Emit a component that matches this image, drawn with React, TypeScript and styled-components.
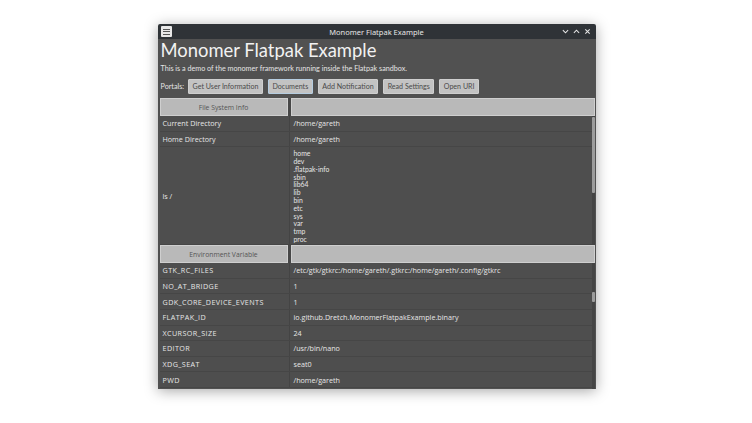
import React from 'react';
import styled, { createGlobalStyle } from 'styled-components';

const GlobalStyle = createGlobalStyle`
  body {
    margin: 0;
    background: #ffffff;
    font-family: Lato, "Noto Sans", sans-serif;
  }
`;

const Page = styled.div`
  width: 752px;
  height: 423px;
  display: flex;
  justify-content: center;
  align-items: flex-start;
  padding-top: 24px;
  box-sizing: border-box;
  padding-left: 1px;
`;

const Window = styled.div`
  width: 438px;
  height: 365px;
  display: flex;
  flex-direction: column;
  box-shadow: 0 2px 14px rgba(0, 0, 0, 0.35);
  border-radius: 2px 2px 0 0;
  overflow: hidden;
`;

const TitleBar = styled.div`
  height: 15px;
  background: #2f3337;
  display: grid;
  grid-template-columns: 40px 1fr 40px;
  align-items: center;
  padding: 0 3px;
  color: #e6e6e6;
  font-family: "Noto Sans", sans-serif;
  font-size: 7.5px;
`;

const TitleText = styled.div`
  text-align: center;
`;

const TitleButtons = styled.div`
  display: flex;
  justify-content: flex-end;
  gap: 4px;
  padding-right: 2px;
`;

const MenuIcon = styled.div`
  width: 11px;
  height: 11px;
  background: #e8e8e8;
  border-radius: 1px;
  display: flex;
  flex-direction: column;
  justify-content: center;
  gap: 1.5px;
  padding: 0 2px;
  box-sizing: border-box;
  span {
    height: 1px;
    background: #555;
  }
`;

const Body = styled.div`
  flex: 1;
  background: #515151;
  display: flex;
  flex-direction: column;
  padding: 0 1px 0 2px;
  min-height: 0;
  color: #e4e4e4;
`;

const Heading = styled.h1`
  margin: 0 0 0 1px;
  font-weight: 400;
  font-size: 18.4px;
  line-height: 23px;
  color: #f2f2f2;
`;

const Subtitle = styled.p`
  margin: 1px 0 0 1px;
  font-size: 7.2px;
  line-height: 11px;
`;

const PortalRow = styled.div`
  display: flex;
  align-items: center;
  gap: 5px;
  margin: 5px 0 0 1px;
  height: 15px;
  font-size: 7.2px;
`;

const PortalLabel = styled.span`
  margin-right: -1px;
`;

const PortalButton = styled.button<{ focused?: boolean }>`
  height: 15px;
  padding: 0 3.5px;
  background: #c3c3c3;
  border: 1px solid ${(p) => (p.focused ? '#b6cde0' : '#cfcfcf')};
  border-radius: 1px;
  color: #4a4a4a;
  font-family: Lato, sans-serif;
  font-size: 7.1px;
  line-height: 13px;
`;

const Section = styled.div<{ grow?: boolean }>`
  display: flex;
  flex-direction: column;
  ${(p) => (p.grow ? 'flex: 1; min-height: 0;' : 'flex: none;')}
`;

const HeaderRow = styled.div`
  display: grid;
  grid-template-columns: 128px 1fr;
  gap: 3px;
  height: 18px;
  background: #474747;
`;

const HeaderCell = styled.div`
  background: #b9b9b9;
  border: 1px solid #cfcfcf;
  color: #555;
  font-family: "Open Sans", sans-serif;
  font-size: 6.8px;
  display: flex;
  align-items: center;
  justify-content: center;
`;

const ScrollArea = styled.div`
  flex: 1;
  display: flex;
  min-height: 0;
  overflow: hidden;
`;

const Rows = styled.div`
  flex: 1;
  display: flex;
  flex-direction: column;
`;

const Row = styled.div<{ h?: number }>`
  display: grid;
  grid-template-columns: 129px 1fr;
  height: ${(p) => p.h ?? 15.6}px;
  flex: none;
  border-bottom: 1px solid #464646;
  box-sizing: border-box;
  background: #4e4e4e;
`;

const Cell = styled.div`
  display: flex;
  align-items: center;
  padding-left: 3px;
  font-family: "Open Sans", sans-serif;
  font-size: 7.2px;
  color: #e6e6e6;
  & + & {
    border-left: 1px solid #444;
    padding-left: 4px;
  }
`;

const EnvName = styled(Cell)`
  letter-spacing: 0.4px;
`;

const ListCell = styled.div`
  border-left: 1px solid #444;
  padding: 3px 0 0 4px;
  font-family: Lato, sans-serif;
  font-size: 6.8px;
  line-height: 7.8px;
  overflow: hidden;
  color: #e6e6e6;
`;

const Track = styled.div`
  width: 3px;
  background: #444;
  position: relative;
  flex: none;
`;

const Thumb = styled.div<{ top: number; h: number }>`
  position: absolute;
  left: 0;
  width: 3px;
  top: ${(p) => p.top}px;
  height: ${(p) => p.h}px;
  background: #9c9c9c;
  border-radius: 1px;
`;

const Chevron = ({ up }: { up?: boolean }) => (
  <svg width="7" height="7" viewBox="0 0 8 8">
    <path
      d={up ? 'M1 5.5 L4 2.5 L7 5.5' : 'M1 2.5 L4 5.5 L7 2.5'}
      fill="none"
      stroke="#e6e6e6"
      strokeWidth="1.2"
    />
  </svg>
);

const Close = () => (
  <svg width="7" height="7" viewBox="0 0 8 8">
    <path d="M1.5 1.5 L6.5 6.5 M6.5 1.5 L1.5 6.5" stroke="#e6e6e6" strokeWidth="1.2" />
  </svg>
);

const lsEntries = ['home', 'dev', '.flatpak-info', 'sbin', 'lib64', 'lib', 'bin', 'etc', 'sys', 'var', 'tmp', 'proc'];

const envVars: [string, string][] = [
  ['GTK_RC_FILES', '/etc/gtk/gtkrc:/home/gareth/.gtkrc:/home/gareth/.config/gtkrc'],
  ['NO_AT_BRIDGE', '1'],
  ['GDK_CORE_DEVICE_EVENTS', '1'],
  ['FLATPAK_ID', 'io.github.Dretch.MonomerFlatpakExample.binary'],
  ['XCURSOR_SIZE', '24'],
  ['EDITOR', '/usr/bin/nano'],
  ['XDG_SEAT', 'seat0'],
  ['PWD', '/home/gareth'],
];

const portals = ['Get User Information', 'Documents', 'Add Notification', 'Read Settings', 'Open URI'];

export default function App() {
  return (
    <>
      <GlobalStyle />
      <Page>
        <Window>
          <TitleBar>
            <MenuIcon>
              <span />
              <span />
              <span />
            </MenuIcon>
            <TitleText>Monomer Flatpak Example</TitleText>
            <TitleButtons>
              <Chevron />
              <Chevron up />
              <Close />
            </TitleButtons>
          </TitleBar>
          <Body>
            <Heading>Monomer Flatpak Example</Heading>
            <Subtitle>This is a demo of the monomer framework running inside the Flatpak sandbox.</Subtitle>
            <PortalRow>
              <PortalLabel>Portals:</PortalLabel>
              {portals.map((p) => (
                <PortalButton key={p} focused={p === 'Documents'}>
                  {p}
                </PortalButton>
              ))}
            </PortalRow>

            <Section style={{ marginTop: 4 }}>
              <HeaderRow>
                <HeaderCell>File System Info</HeaderCell>
                <HeaderCell />
              </HeaderRow>
              <ScrollArea>
                <Rows>
                  <Row>
                    <Cell>Current Directory</Cell>
                    <Cell>/home/gareth</Cell>
                  </Row>
                  <Row>
                    <Cell>Home Directory</Cell>
                    <Cell>/home/gareth</Cell>
                  </Row>
                  <Row h={98}>
                    <Cell>ls /</Cell>
                    <ListCell>
                      {lsEntries.map((e) => (
                        <div key={e}>{e}</div>
                      ))}
                    </ListCell>
                  </Row>
                </Rows>
                <Track>
                  <Thumb top={1} h={76} />
                </Track>
              </ScrollArea>
            </Section>

            <Section grow>
              <HeaderRow>
                <HeaderCell>Environment Variable</HeaderCell>
                <HeaderCell />
              </HeaderRow>
              <ScrollArea>
                <Rows>
                  {envVars.map(([k, v]) => (
                    <Row key={k}>
                      <EnvName>{k}</EnvName>
                      <Cell>{v}</Cell>
                    </Row>
                  ))}
                </Rows>
                <Track>
                  <Thumb top={29} h={10} />
                </Track>
              </ScrollArea>
            </Section>
          </Body>
        </Window>
      </Page>
    </>
  );
}
